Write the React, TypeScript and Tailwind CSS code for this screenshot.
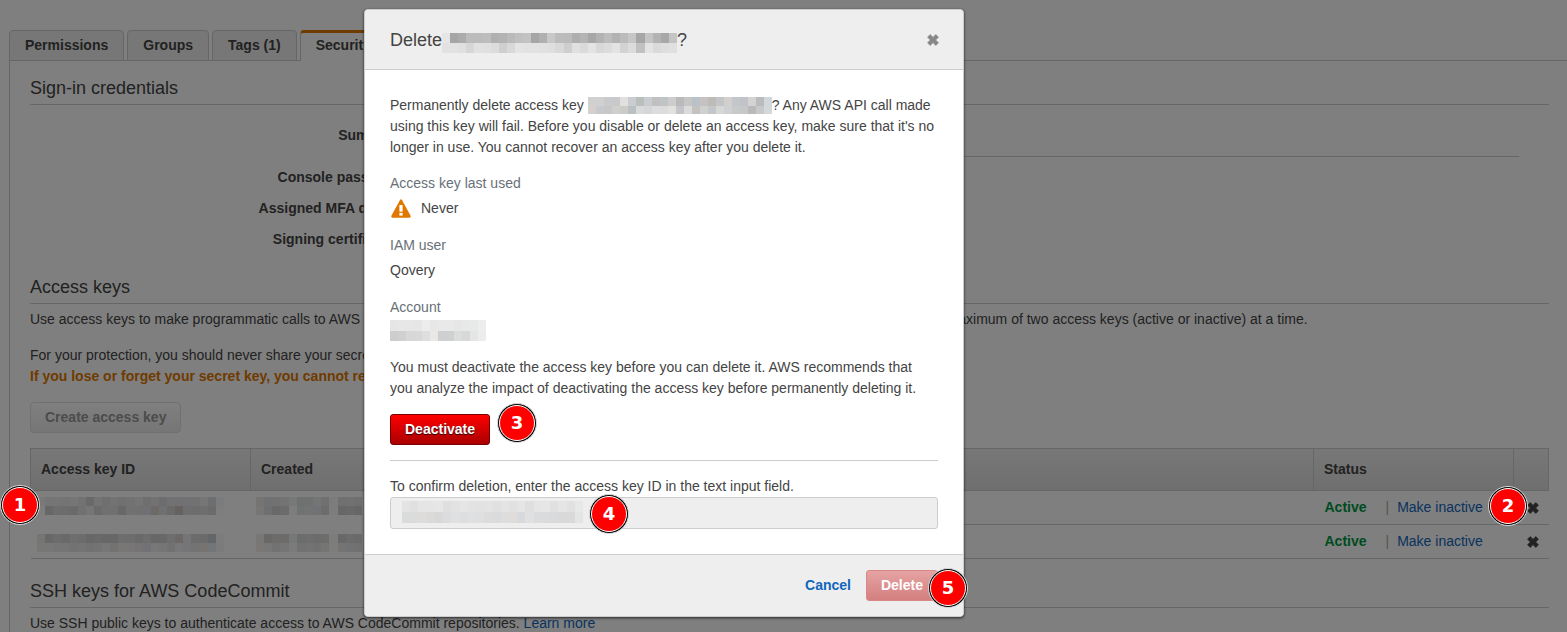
import React from 'react';

/* Each mosaic row lists one hex colour per cell; two digits stand for a grey. */
type MosaicProps = { rows: string[]; width: number; height: number; label: string; className?: string };

function Mosaic({ rows, width, height, label, className = '' }: MosaicProps) {
  const cells = rows.map((r) => r.split(' '));
  const cols = cells[0].length;
  return (
    <svg
      role="img"
      aria-label={label}
      width={width}
      height={height}
      viewBox={`0 0 ${cols} ${rows.length}`}
      preserveAspectRatio="none"
      shapeRendering="crispEdges"
      className={className}
    >
      {cells.map((row, y) =>
        row.map((c, x) => (
          <rect key={`${x}-${y}`} x={x} y={y} width={1} height={1} fill={c.length === 2 ? `#${c}${c}${c}` : `#${c}`} />
        )),
      )}
    </svg>
  );
}

const titleMosaic = [
  'e6 a5 ab bb bb bd b0 b3 ba c0 c3 a5 b0 c8 bc bb ae b4 a7 b2 bc b2 bb c6 a6 c4 b3 a8 c4',
  'e2 e2 e0 d6 e1 e0 dc cf d8 e4 e2 e2 e1 df d9 ce e0 da e3 d8 dc e3 d3 dc c1 e3 da de e0',
];
const paragraphMosaic = [
  'd0d0d0 cfd0cf c8cacc c9c9cc e2dfde cacccf babebd cacdd0 c0c0c0 c1c4c4 cdcdce bababa c6c6c6 bbc1c8 c5c2c1 bfbbb9 c3c5c7 d2cfcd c3c6ca c0c3c8 d4d3d1 babbbb d1d7db',
  'd4d0cd c7c9cd c7c7ca cfcfce cbcbc8 bbc0c4 d9dbda d6d6d6 dcdddf dddcdb e1e1df c5c5c9 d9dbdd c4c2bf cfd0cf c3c7ca d7d7d5 ced0d3 c8cac9 c7c7ca b9b9b9 c6c8c9 d3d8db',
];
const accountMosaic = [
  'e6 e7 e7 e6 ed e7 eae8e8 e8e9eb e6 e8 e8eaea ed',
  'cd d0 d7 d8 dedede ebe7e4 cecfd1 d0 d9dddd d8d8d6 e4e5e7 ec',
];
const inputMosaic = [
  'e3 e0 e5 e5 e6 e1dfde e2 e5 e3 e2 e3 e0 e4 e1 e5 e1dfde e5 e6 e0 e5 e1 e6e8e7',
  'dadbdb dadbdb dddcda dcdad8 d8 dcdcde dfe0e2 de dfe0e2 dfdfdf dc dadcdc dd dfdcda d8d9dc dfe0e2 dcdcde dadbdb d9dadc d9 d9 e3e5e5',
];
const idMosaicA = [
  'f2 ea ea e8 ec e4 d2 e8 de e6 e0 e4 ea de e4 dad9dd e4 e2 e0e4e6 e4 ec dc f6f8fa',
  'fa ce da d8 d4 e2 f0ece8 d2d6da e0 dce0e4 d0 e2 e0 dce0e6 dad2ce dce0e4 d4 cac4c0 dc dad8dc dc d6 fa',
];
const idMosaicB = [
  'eeeae6 d0 d8 d2 dc d8 ce d2 ce ce dc da d2 da ce d0 dc d8d0cc e6eaee d8 d6 c8cacd f8',
  'f2eeea ee ea e8eaec e4 e8 e2 e6 ee e4 f2eeea ee eae8e6 e0e4e6 ee ea e2 ee eae8ec e6 ece8e4 e6eaee f6',
];
const dateMosaicA = [
  'ece8e6 e0e2e4 e4 e6 f0 dce0e4 e0 e8eaee e0 f8 e0 e0e2e4 de',
  'f0eceb dedede d2 d6 fa e0e4e6 e6 e0e4ea d8 fa ce d2 cecccb',
];
const dateMosaicB = [
  'f2eeea d4d0cc d8 d8d6d4 eaeef2 d8 dc d8 dedad6 fa d0 d8 d8d4d0',
  'f2f0ee ee e4 ea f6 e2 e6 e2 eceae8 fa eae8e6 e0e4e6 e2',
];

function Badge({ n, className }: { n: number; className: string }) {
  return (
    <span
      className={`absolute z-30 flex size-10 items-center justify-center rounded-full border border-[#ddd] bg-black p-px ${className}`}
    >
      <span className="flex size-full items-center justify-center rounded-full border border-white bg-[#ff0000] font-['DejaVu_Sans',sans-serif] text-lg font-bold leading-none text-white">
        {n}
      </span>
    </span>
  );
}

function CrossIcon({ className }: { className: string }) {
  return (
    <svg viewBox="0 0 12 12" aria-hidden="true" className={className}>
      <path
        d="M3.2 0.6 L6 3.4 L8.8 0.6 L11.4 3.2 L8.6 6 L11.4 8.8 L8.8 11.4 L6 8.6 L3.2 11.4 L0.6 8.8 L3.4 6 L0.6 3.2 Z"
        fill="currentColor"
        stroke="currentColor"
        strokeWidth="0.8"
        strokeLinejoin="round"
      />
    </svg>
  );
}

function WarningIcon() {
  return (
    <svg viewBox="0 0 20 21" aria-hidden="true" className="ml-px h-[21px] w-5">
      <path d="M9 2 Q10 0.4 11 2 L19.6 17.8 Q20.2 19.6 18.4 19.8 H1.6 Q-0.2 19.6 0.4 17.8 Z" fill="#e07700" />
      <rect x="8.4" y="7" width="3.2" height="6.6" fill="#fff" />
      <rect x="8.4" y="14.8" width="3.2" height="2.8" fill="#fff" />
    </svg>
  );
}

function SectionTitle({ children }: { children: React.ReactNode }) {
  return <h2 className="border-b border-[#ccc] pb-[2px] text-lg leading-7">{children}</h2>;
}

const tabs = ['Permissions', 'Groups', 'Tags (1)'];

function KeyRow({ id, date, last }: { id: string[]; date: string[]; last: boolean }) {
  const line = 'border-b border-[#ccc]';
  const masked = last ? line : '';
  const shift = last ? 'mt-[3px]' : 'mb-1';
  return (
    <tr className="h-[34px]">
      <td className={`py-0 pl-[6px] ${masked}`}>
        <Mosaic rows={id} width={187} height={18} label="Hidden access key ID" className={shift} />
      </td>
      <td className={`py-0 pl-[5px] ${masked}`}>
        <Mosaic rows={date} width={106} height={18} label="Hidden date" className={shift} />
      </td>
      <td className={line} />
      <td className={`pl-[11px] ${line}`}>
        <span className="inline-block w-[61px] font-bold text-[#009944]">Active</span>
        <span className="mr-2 text-[#b8a89a]">|</span>
        <a href="#status" className="text-[#1166bb]">Make inactive</a>
      </td>
      <td className={line}>
        <button type="button" aria-label="Delete access key" className="ml-[13px] block">
          <CrossIcon className="size-3 text-[#444]" />
        </button>
      </td>
    </tr>
  );
}

function CredentialsPage() {
  const th = 'border border-[#ccc] pl-[10px] text-left font-bold';
  return (
    <main className="pl-[9px] pt-[30px]">
      <nav className="relative z-10 -mb-px flex gap-[3px] font-bold">
        {tabs.map((t) => (
          <a key={t} href="#tab" className="h-[31px] rounded-t border border-[#ccc] bg-[#eee] px-[15px] leading-7">
            {t}
          </a>
        ))}
        <a
          href="#tab"
          aria-current="page"
          className="h-[31px] rounded-t border-x border-t-3 border-x-[#ccc] border-t-[#e07700] bg-white px-[15px] leading-6"
        >
          Security credentials
        </a>
      </nav>

      <div className="border-l border-t border-[#ccc] pl-5 pr-[18px] pt-[13px]">
        <SectionTitle>Sign-in credentials</SectionTitle>
        <dl className="grid grid-cols-[372px_1fr] gap-x-5 pr-[30px] pt-5 [&>dt]:text-right [&>dt]:font-bold">
          <dt>Summary</dt>
          <dd className="mb-[10px] h-8 border-b border-[#ccc]" />
          <dt className="mb-[10px]">Console password</dt>
          <dd />
          <dt className="mb-[10px]">Assigned MFA device</dt>
          <dd />
          <dt>Signing certificates</dt>
          <dd />
        </dl>

        <div className="pt-[23px]">
          <SectionTitle>Access keys</SectionTitle>
          <p className="pt-[5px]">
            Use access keys to make programmatic calls to AWS from the AWS CLI, Tools for PowerShell, AWS SDKs, or direct
            AWS API calls. You can have a maximum of two access keys (active or inactive) at a time.
          </p>
          <p className="pt-[15px]">
            For your protection, you should never share your secret keys with anyone.
            <br />
            <strong className="text-[#e07700]">If you lose or forget your secret key, you cannot retrieve it.</strong>
          </p>
          <button
            type="button"
            disabled
            className="mt-[15px] h-[31px] rounded-sm border border-[#e0e0e0] bg-linear-to-b from-white to-[#ececec] px-[14px] pb-px font-bold text-[#999]"
          >
            Create access key
          </button>
        </div>

        <table className="mt-[15px] w-full table-fixed border-collapse">
          <colgroup>
            <col className="w-[220px]" />
            <col className="w-[230px]" />
            <col />
            <col className="w-[200px]" />
            <col className="w-[35px]" />
          </colgroup>
          <thead>
            <tr className="h-[42px] bg-linear-to-b from-[#f0f0f0] to-[#dedede]">
              <th className={th}>Access key ID</th>
              <th className={th}>Created</th>
              <th className={th}>Last used</th>
              <th className={th}>Status</th>
              <th className={th} />
            </tr>
          </thead>
          <tbody>
            <KeyRow id={idMosaicA} date={dateMosaicA} last={false} />
            <KeyRow id={idMosaicB} date={dateMosaicB} last />
          </tbody>
        </table>

        <div className="pt-[18px]">
          <SectionTitle>SSH keys for AWS CodeCommit</SectionTitle>
          <p className="pt-[5px]">
            Use SSH public keys to authenticate access to AWS CodeCommit repositories.{' '}
            <a href="#learn" className="text-[#1166bb]">Learn more</a>
          </p>
        </div>
      </div>
    </main>
  );
}

function DeleteDialog() {
  return (
    <div
      role="dialog"
      aria-modal="true"
      aria-labelledby="dialog-title"
      className="w-[600px] rounded border border-[#ccc] bg-white shadow-[0_1px_3px_rgba(0,0,0,0.7)]"
    >
      <header className="flex h-[60px] items-center justify-between rounded-t border-b border-[#ccc] bg-[#eee] pl-[25px] pr-6">
        <h1 id="dialog-title" className="flex items-center text-lg">
          Delete
          <Mosaic rows={titleMosaic} width={235} height={20} label="hidden access key ID" className="mt-[6px]" />?
        </h1>
        <button type="button" aria-label="Close">
          <CrossIcon className="size-3 text-[#888]" />
        </button>
      </header>

      <div className="p-[25px]">
        <p>
          Permanently delete access key{' '}
          <Mosaic
            rows={paragraphMosaic}
            width={184}
            height={17}
            label="hidden access key ID"
            className="mb-[2px] inline-block align-middle"
          />
          ? Any AWS API call made using this key will fail. Before you disable or delete an access key, make sure that
          it's no longer in use. You cannot recover an access key after you delete it.
        </p>
        <dl className="space-y-4 pt-[15px] [&_dt]:text-[#687078]">
          <div>
            <dt className="mb-1">Access key last used</dt>
            <dd className="flex gap-[10px]">
              <WarningIcon />
              Never
            </dd>
          </div>
          <div>
            <dt className="mb-1">IAM user</dt>
            <dd>Qovery</dd>
          </div>
          <div>
            <dt className="mb-[2px]">Account</dt>
            <dd>
              <Mosaic rows={accountMosaic} width={96} height={21} label="Hidden account" />
            </dd>
          </div>
        </dl>
        <p className="pt-4">
          You must deactivate the access key before you can delete it. AWS recommends that you analyze the impact of
          deactivating the access key before permanently deleting it.
        </p>
        <div className="relative mt-[15px] border-b border-[#ccc] pb-[15px]">
          <button
            type="button"
            className="block h-[31px] rounded-[3px] border border-[#770000] bg-linear-to-b from-[#ff0000] to-[#aa0000] px-[14px] pb-px font-bold text-white text-shadow-[0_1px_1px_rgba(0,0,0,0.8)]"
          >
            Deactivate
          </button>
          <Badge n={3} className="-top-[11px] left-[107px]" />
        </div>
        <label htmlFor="confirm" className="block pt-[15px]">
          To confirm deletion, enter the access key ID in the text input field.
        </label>
        <div className="relative">
          <input
            id="confirm"
            type="text"
            disabled
            className="block h-8 w-full rounded-[3px] border border-[#ccc] bg-[#eee] px-[10px]"
          />
          <Mosaic
            rows={inputMosaic}
            width={181}
            height={22}
            label="Hidden access key ID"
            className="absolute left-3 top-1"
          />
          <Badge n={4} className="-top-[3px] left-[199px]" />
        </div>
      </div>

      <footer className="relative flex items-center justify-end gap-[15px] rounded-b border-t border-[#ccc] bg-[#eee] px-[25px] py-[15px] font-bold">
        <button type="button" className="text-[#1166bb]">Cancel</button>
        <button
          type="button"
          disabled
          className="h-[31px] rounded-[3px] border border-[#d98686] bg-linear-to-b from-[#e5a3a3] to-[#d47f7f] px-[14px] pb-px text-white"
        >
          Delete
        </button>
        <Badge n={5} className="-right-[5px] top-[13px]" />
      </footer>
    </div>
  );
}

export default function App() {
  return (
    <div className="relative h-screen overflow-hidden bg-white font-['Liberation_Sans',Arial,sans-serif] text-sm leading-[21px] text-[#444]">
      <CredentialsPage />
      <div className="absolute inset-0 z-20 bg-black/50 pl-[364px] pt-[9px]">
        <DeleteDialog />
        <Badge n={1} className="left-0 top-[485px]" />
        <Badge n={2} className="right-[39px] top-[486px]" />
      </div>
    </div>
  );
}
